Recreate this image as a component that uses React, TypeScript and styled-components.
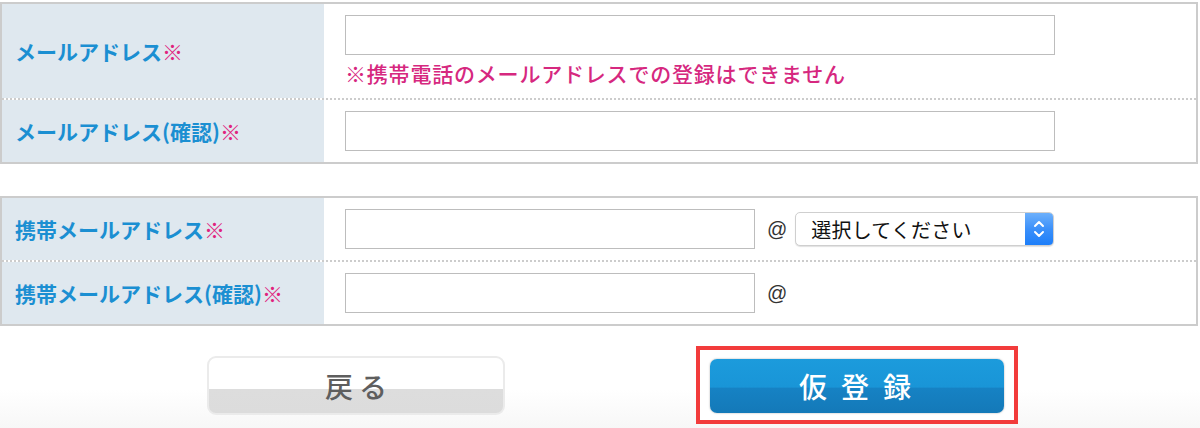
import React from "react";
import styled, { createGlobalStyle } from "styled-components";

const GlobalStyle = createGlobalStyle`
  html, body {
    margin: 0;
    padding: 0;
    background: #ffffff;
  }
  body {
    font-family: "Noto Sans CJK JP", "Noto Sans", "Liberation Sans", sans-serif;
  }
  * { box-sizing: border-box; }
`;

const Page = styled.div`
  width: 1200px;
  height: 428px;
  padding-top: 2px;
  display: flex;
  flex-direction: column;
  overflow: hidden;
  background: linear-gradient(to bottom, #ffffff 0, #ffffff 390px, #f7f7f7 428px);
`;

const FormTable = styled.section<{ $gap?: number }>`
  width: 1198px;
  border: 2px solid #cccccc;
  margin-top: ${(p) => p.$gap ?? 0}px;
  background: #ffffff;
`;

const Row = styled.div`
  display: grid;
  grid-template-columns: 322px 1fr;
  & + & {
    border-top: 2px dotted #cccccc;
  }
`;

const Label = styled.div`
  background: #dfe8ef;
  color: #1b8fd2;
  font-weight: 700;
  font-size: 21px;
  line-height: 28px;
  padding-left: 13px;
  display: flex;
  align-items: center;
`;

const Required = styled.span`
  color: #e0237d;
  font-weight: 900;
`;

const Field = styled.div`
  padding: 11px 0 11px 21px;
  display: flex;
  flex-direction: column;
  align-items: flex-start;
`;

const Inline = styled.div`
  display: flex;
  align-items: center;
`;

const TextInput = styled.input<{ $w: number }>`
  width: ${(p) => p.$w}px;
  height: 40px;
  border: 1px solid #bdbdbd;
  border-radius: 0;
  background: #ffffff;
  padding: 0 8px;
  font-size: 18px;
  outline: none;
`;

const Note = styled.p`
  margin: 4px 0 0 0;
  color: #d6287f;
  font-size: 21px;
  font-weight: 500;
  line-height: 28px;
  letter-spacing: 0.8px;
`;

const At = styled.span`
  color: #333333;
  font-family: "Liberation Sans", "DejaVu Sans", sans-serif;
  font-size: 20px;
  margin: 0 8px 0 12px;
`;

const SelectBox = styled.div`
  width: 259px;
  height: 34px;
  border: 1px solid #cfcfcf;
  border-radius: 5px;
  box-shadow: 0 1px 1px rgba(0, 0, 0, 0.12);
  background: #ffffff;
  display: flex;
  align-items: stretch;
  overflow: hidden;
`;

const SelectText = styled.span`
  flex: 1;
  padding-left: 15px;
  display: flex;
  align-items: center;
  font-size: 20px;
  color: #111111;
  letter-spacing: 0.2px;
`;

const SelectArrow = styled.span`
  width: 28px;
  background: linear-gradient(to bottom, #6db0fb 0%, #3b90fa 50%, #1d7ef9 100%);
  display: flex;
  align-items: center;
  justify-content: center;
`;

const ButtonBar = styled.div`
  flex: 1;
  display: flex;
  align-items: flex-start;
  padding: 20px 0 0 207px;
  gap: 191px;
`;

const BackButton = styled.button`
  margin-top: 10px;
  width: 298px;
  height: 59px;
  border: 2px solid #ebebeb;
  border-radius: 9px;
  background: linear-gradient(to bottom, #ffffff 0, #ffffff 57%, #dddddd 57%, #dcdcdc 100%);
  color: #5e5e5e;
  font-family: "Noto Sans CJK JP", sans-serif;
  font-size: 28px;
  font-weight: 500;
  letter-spacing: 6px;
  padding: 0 0 0 6px;
  display: flex;
  align-items: center;
  justify-content: center;
`;

const Highlight = styled.div`
  width: 322px;
  height: 78px;
  border: 4px solid #f23b3b;
  padding: 9px 10px 0 10px;
  background: #ffffff;
`;

const SubmitButton = styled.button`
  width: 294px;
  height: 54px;
  border: none;
  border-radius: 7px;
  background: linear-gradient(to bottom, #1c9bdc 0, #1995d7 52%, #1682c4 54%, #1479b8 100%);
  box-shadow: 0 0 2px rgba(0, 0, 0, 0.35);
  color: #ffffff;
  font-family: "Noto Sans CJK JP", sans-serif;
  font-size: 28px;
  font-weight: 500;
  letter-spacing: 14px;
  padding: 0 0 0 10px;
  display: flex;
  align-items: center;
  justify-content: center;
`;

const Chevrons = () => (
  <svg width="14" height="22" viewBox="0 0 14 22" fill="none">
    <path d="M3 8 L7 4 L11 8" stroke="#ffffff" strokeWidth="2" strokeLinecap="round" strokeLinejoin="round" />
    <path d="M3 14 L7 18 L11 14" stroke="#ffffff" strokeWidth="2" strokeLinecap="round" strokeLinejoin="round" />
  </svg>
);

export default function App() {
  return (
    <>
      <GlobalStyle />
      <Page>
        <FormTable>
          <Row>
            <Label>
              メールアドレス<Required>※</Required>
            </Label>
            <Field>
              <TextInput $w={710} type="text" />
              <Note>※携帯電話のメールアドレスでの登録はできません</Note>
            </Field>
          </Row>
          <Row>
            <Label>
              メールアドレス(確認)<Required>※</Required>
            </Label>
            <Field>
              <TextInput $w={710} type="text" />
            </Field>
          </Row>
        </FormTable>

        <FormTable $gap={32}>
          <Row>
            <Label>
              携帯メールアドレス<Required>※</Required>
            </Label>
            <Field>
              <Inline>
                <TextInput $w={410} type="text" />
                <At>@</At>
                <SelectBox>
                  <SelectText>選択してください</SelectText>
                  <SelectArrow>
                    <Chevrons />
                  </SelectArrow>
                </SelectBox>
              </Inline>
            </Field>
          </Row>
          <Row>
            <Label>
              携帯メールアドレス(確認)<Required>※</Required>
            </Label>
            <Field>
              <Inline>
                <TextInput $w={410} type="text" />
                <At>@</At>
              </Inline>
            </Field>
          </Row>
        </FormTable>

        <ButtonBar>
          <BackButton type="button">戻る</BackButton>
          <Highlight>
            <SubmitButton type="button">仮登録</SubmitButton>
          </Highlight>
        </ButtonBar>
      </Page>
    </>
  );
}
